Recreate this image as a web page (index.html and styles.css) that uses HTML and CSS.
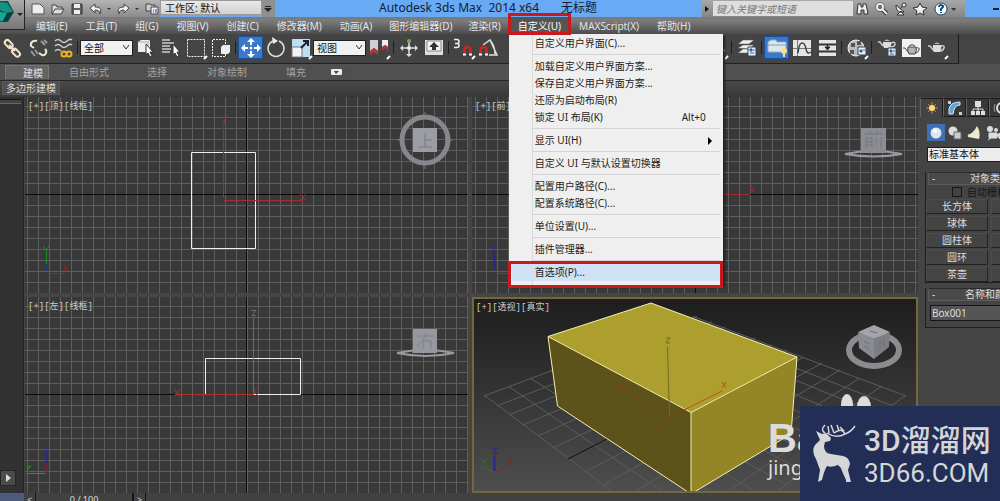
FILE: index.html
```html
<!DOCTYPE html>
<html lang="zh-CN">
<head>
<meta charset="utf-8">
<title>Autodesk 3ds Max 2014 x64</title>
<link rel="stylesheet" href="styles.css">
</head>
<body>
<header class="head">
  <button class="app" aria-label="应用程序">
    <svg width="25" height="30" viewBox="0 0 25 30"><path d="M0 1h8l6 11-6 10H0z" fill="#0b5752"/><path d="M0 2l7 1 6 9-6 1-7-3z" fill="#159283"/><path d="M0 12l7 1-4 8H0z" fill="#1aa694"/><path d="M7 13l6-1-6 9H3z" fill="#063c3c"/><path d="M17 13h6l-3 3z" fill="#222"/></svg>
  </button>
  <div class="titlebar">
    <div class="quick">
      <button aria-label="新建"><svg width="14" height="12" viewBox="0 0 14 12"><path d="M1 1h8l4 4v6H1z" fill="#eee" stroke="#555"/></svg></button>
      <button aria-label="打开"><svg width="14" height="12" viewBox="0 0 14 12"><path d="M1 11V2h4l1 2h5v2M1 11l3-5h9l-3 5z" fill="#ddd" stroke="#444"/></svg></button>
      <button aria-label="保存"><svg width="12" height="12" viewBox="0 0 12 12"><path d="M1 1h10v10H1z" fill="#59626c" stroke="#333"/><path d="M3 1h6v4H3zM3 7h6v4H3z" fill="#eee"/></svg></button>
      <button aria-label="撤消"><svg width="22" height="12" viewBox="0 0 22 12"><path d="M1 5l5-4v3c5 0 7 2 5 7 0-3-2-4-5-4v3z" fill="#eee" stroke="#444"/><path d="M18 5h4l-2 2z" fill="#333"/></svg></button>
      <button aria-label="重做"><svg width="22" height="12" viewBox="0 0 22 12"><path d="M12 5L7 1v3C2 4 0 6 2 11c0-3 2-4 5-4v3z" fill="#eee" stroke="#444"/><path d="M18 5h4l-2 2z" fill="#333"/></svg></button>
      <button aria-label="项目文件夹"><svg width="14" height="13" viewBox="0 0 14 13"><path d="M1 2h4l1 1h4v6H1z" fill="#ccc" stroke="#444"/><path d="M6 5h7v7H6z" fill="#eee" stroke="#446"/><path d="M8 8h1M10 8h2M8 10h1M10 10h2" stroke="#346"/></svg></button>
    </div>
    <select class="workspace" aria-label="工作区"><option>工作区: 默认</option></select>
    <button class="drop" aria-label="自定义快速访问工具栏"><svg width="12" height="10" viewBox="0 0 12 10"><path d="M3 2h6v1H3zM2 4h8L6 8z" fill="#222"/></svg></button>
    <h1>Autodesk 3ds Max  2014 x64<span>无标题</span></h1>
    <div class="search">
      <button aria-label="展开"><svg width="9" height="10" viewBox="0 0 9 10"><path d="M3 2l4 3-4 3z" fill="#111"/></svg></button>
      <input type="text" aria-label="搜索" placeholder="键入关键字或短语">
      <button aria-label="查找"><svg width="16" height="14" viewBox="0 0 16 14"><path d="M3 2h3v3h2V2h3l2 10H9V8H6v4H2z" fill="#eee" stroke="#333"/></svg></button>
      <button aria-label="订阅"><svg width="16" height="14" viewBox="0 0 16 14"><path d="M8 7l5 5" stroke="#333" stroke-width="4"/><circle cx="6" cy="5" r="3" fill="#777" stroke="#333" stroke-width="3"/><path d="M8 7l5 5" stroke="#eee" stroke-width="2"/><circle cx="6" cy="5" r="3" fill="none" stroke="#eee" stroke-width="2"/></svg></button>
      <button aria-label="通讯中心"><svg width="16" height="14" viewBox="0 0 16 14"><path d="M3 3c0 6 3 8 8 7zM4 13h7l-3-4zM7 7l4-5" fill="#eee" stroke="#333"/><circle cx="11" cy="3" r="2" fill="#eee" stroke="#333"/></svg></button>
      <button aria-label="收藏夹"><svg width="16" height="14" viewBox="0 0 16 14"><path d="M8 1l2 4 5 1-4 3 1 4-4-2-4 2 1-4-4-3 5-1z" fill="#eee" stroke="#333"/></svg></button>
      <button class="help" aria-label="帮助"><svg width="24" height="14" viewBox="0 0 24 14"><circle cx="8" cy="7" r="6" fill="#fff" stroke="#234a72"/><path d="M6 5c0-3 5-2 4 0l-2 2v2M8 10v1" stroke="#174a86" stroke-width="2" fill="none"/><path d="M18 6h5l-2 3z" fill="#333"/></svg></button>
    </div>
    <button class="min" aria-label="最小化"><svg width="8" height="4" viewBox="0 0 8 4"><path d="M1 2h6" stroke="#123" stroke-width="2"/></svg></button>
  </div>
  <nav class="menubar">
    <button>编辑(E)</button><button>工具(T)</button><button>组(G)</button><button>视图(V)</button><button>创建(C)</button><button>修改器(M)</button><button>动画(A)</button><button class="tight">图形编辑器(D)</button><button class="tight">渲染(R)</button>
    <div class="open">
      <button aria-expanded="true">自定义(U)</button>
      <div class="menu" role="menu">
        <button role="menuitem">自定义用户界面(C)...</button>
        <hr>
        <button role="menuitem">加载自定义用户界面方案...</button>
        <button role="menuitem">保存自定义用户界面方案...</button>
        <button role="menuitem">还原为启动布局(R)</button>
        <button role="menuitem">锁定 UI 布局(K)<kbd>Alt+0</kbd></button>
        <hr>
        <button role="menuitem">显示 UI(H)<svg class="sub" width="4" height="8" viewBox="0 0 4 8"><path d="M0 0l4 4-4 4z"/></svg></button>
        <hr>
        <button role="menuitem">自定义 UI 与默认设置切换器</button>
        <hr>
        <button role="menuitem">配置用户路径(C)...</button>
        <button role="menuitem">配置系统路径(C)...</button>
        <hr>
        <button role="menuitem">单位设置(U)...</button>
        <hr>
        <button role="menuitem">插件管理器...</button>
        <hr>
        <button role="menuitem" class="hot">首选项(P)...</button>
      </div>
    </div>
    <button>MAXScript(X)</button><button>帮助(H)</button>
  </nav>
</header>

<div class="toolbar">
  <button aria-label="选择并链接"><svg viewBox="0 0 24 24"><g fill="none" stroke="#f2e6c8" stroke-width="2"><rect x="3" y="5" width="9" height="5" rx="2.500" transform="rotate(45 7 8)"/><rect x="11" y="14" width="9" height="5" rx="2.500" transform="rotate(45 15 16)"/><path d="M8 9l6 6"/></g></svg></button>
  <button aria-label="取消链接"><svg viewBox="0 0 24 24"><g fill="none" stroke="#f2e6c8" stroke-width="2"><path d="M11 5c-3-1-7 1-6 5l3 2M19 13c3 3 0 7-3 6l-3-2"/></g><g fill="none" stroke="#9a9a9a" stroke-width="2"><path d="M15 5l4 4M18 4l3 3M5 15l4 5M9 14l3 4"/></g></svg></button>
  <button aria-label="绑定到空间扭曲"><svg viewBox="0 0 24 24"><g fill="none" stroke="#ccc" stroke-width="1.500"><path d="M4 5q3-3 6 0t6 0 5-1M4 10q3-3 6 0t6 0 5-1M4 15q3-3 6 0"/></g><g fill="none" stroke="#f3b21c" stroke-width="2"><circle cx="13" cy="18" r="2.500"/><circle cx="18" cy="18" r="2.500"/></g></svg></button>
  <i class="sep"></i>
  <select class="filter" aria-label="选择过滤器"><option>全部</option></select>
  <button aria-label="选择对象"><svg viewBox="0 0 24 24"><path d="M4 6l3-2h9v12H4z" fill="#eee"/><path d="M4 6h10l2-2M14 6v10" stroke="#aaa" fill="none"/><path d="M12 8l7 8h-3l2 4-2 1-2-4-2 2z" fill="#fff" stroke="#333"/></svg></button>
  <button aria-label="按名称选择"><svg viewBox="0 0 24 24"><path d="M3 4h8M3 7h12M3 10h8M3 13h9M3 16h8" stroke="#ccc" stroke-width="1.500"/><path d="M14 8l7 8h-3l2 4-2 1-2-4-2 2z" fill="#fff" stroke="#333"/></svg></button>
  <button aria-label="矩形选择区域"><svg viewBox="0 0 24 24"><path d="M3.500 3.500h17v17h-17z" fill="none" stroke="#eee" stroke-dasharray="2 1"/><path d="M20 23l3-3" stroke="#fff" stroke-width="2"/></svg></button>
  <button aria-label="窗口/交叉"><svg viewBox="0 0 24 24"><path d="M16.500 8V3.500h-13v17h13V17" fill="none" stroke="#eee" stroke-dasharray="2 1"/><path d="M12 11l2-2h7v7l-2 2h-7z" fill="#eee"/></svg></button>
  <i class="sep"></i>
  <button class="on" aria-label="选择并移动"><svg viewBox="0 0 24 24"><path d="M12 2l4 4h-3v3h-2V6H8zM12 22l4-4h-3v-3h-2v3H8zM2 12l4-4v3h3v2H6v3zM22 12l-4-4v3h-3v2h3v3z" fill="#fff"/><circle cx="12" cy="12" r="1.500" fill="#fff"/></svg></button>
  <button aria-label="选择并旋转"><svg viewBox="0 0 24 24"><path d="M15 5a8 8 0 1 1-6 0" fill="none" stroke="#ddd" stroke-width="1.500"/><path d="M8 1l6 4-5 3z" fill="#eee"/></svg></button>
  <button aria-label="选择并缩放"><svg viewBox="0 0 24 24"><path d="M3 3h18v18H3z" fill="#bcdcf0"/><path d="M3 11h10v10H3z" fill="#f2f2f2" stroke="#778"/><path d="M12 12l6-6M14 5h5v5" stroke="#123" stroke-width="2" fill="none"/><path d="M20 23l3-3" stroke="#fff" stroke-width="2"/></svg></button>
  <select class="filter" aria-label="参考坐标系"><option>视图</option></select>
  <button aria-label="使用轴点中心"><svg viewBox="0 0 24 24"><path d="M3 4h8v11l-4-3-4 3z" fill="#ccd0d8"/><path d="M3 15l4-3 4 3v4l-4-3-4 3z" fill="#b33"/><path d="M15 4h6v7l-3-2-3 2z" fill="#eee"/><path d="M15 11l3-2 3 2v4l-3-3-3 3z" fill="#b33"/><path d="M20 23l3-3" stroke="#fff" stroke-width="2"/></svg></button>
  <i class="sep"></i>
  <button aria-label="选择并操纵"><svg viewBox="0 0 24 24"><path d="M12 5v14M5 12h14" stroke="#ddd" stroke-width="1.500"/><circle cx="12" cy="5" r="2" fill="#6fae4a"/><path d="M12 21l-3-3h6zM3 12l3-3v6zM21 12l-3-3v6z" fill="#ddd"/><circle cx="12" cy="12" r="2" fill="#eee"/></svg></button>
  <button aria-label="键盘快捷键覆盖"><svg viewBox="0 0 24 24"><path d="M3 4h18v15H3z" fill="#ddd"/><path d="M5 5h14v10H5z" fill="#f5f5f5" stroke="#888"/><path d="M12 6l5 5h-3v3h-4v-3H7z" fill="#333"/></svg></button>
  <i class="sep"></i>
  <button aria-label="捕捉开关"><svg viewBox="0 0 24 24"><path d="M2 3.500h3q2 0 2 2t-2 2H3h2q2 0 2 2t-2 2H2" fill="none" stroke="#eee" stroke-width="1.500"/><path d="M12.500 17v-3q0-3 3-3t3 3v3" fill="none" stroke="#c4282b" stroke-width="2.500"/><path d="M11 18.500h3M17 18.500h3" stroke="#fff" stroke-width="2"/><path d="M20 23l3-3" stroke="#fff" stroke-width="2"/></svg></button>
  <button aria-label="角度捕捉"><svg viewBox="0 0 24 24"><path d="M6 9l7-5 7 15h-8M13 4q5 6 5 14" fill="none" stroke="#ddd" stroke-width="1.500"/><path d="M3.500 17v-3q0-3 3-3t3 3v3" fill="none" stroke="#c4282b" stroke-width="2.500"/><path d="M2 18.500h3M8 18.500h3" stroke="#fff" stroke-width="2"/></svg></button>
  <div class="covered"></div>
  <svg class="tail" viewBox="0 0 8 24"><path d="M0 13h4v3H0z" fill="#ddd"/><path d="M4 23l3-3" stroke="#fff" stroke-width="2"/></svg>
  <i class="sep"></i>
  <button aria-label="层管理器"><svg viewBox="0 0 24 24"><path d="M3 8l5-4h11l-5 4zM3 12l5-3h11l-5 4zM3 17l5-4h11l-5 4z" fill="#eee" stroke="#555" stroke-width=".5"/><path d="M13 11h8v9h-8z" fill="#e6eef8" stroke="#345"/><path d="M15 13h2v2h-2zM15 17h4M18 14h2" stroke="#3a6090" fill="#3a6090"/></svg></button>
  <i class="sep"></i>
  <button class="on" aria-label="切换功能区"><svg viewBox="0 0 24 24"><path d="M3 6l3-2h5l1 2h9v10H3z" fill="#dde7f4" stroke="#9ab"/><path d="M3 9h18" stroke="#89a"/><circle cx="19" cy="15" r="3" fill="#ffe07a"/><path d="M18 18h2v3h-2z" fill="#ddd"/></svg></button>
  <button aria-label="曲线编辑器"><svg viewBox="0 0 24 24"><path d="M3 4h18v16H3z" fill="#e4e4e4"/><path d="M7.500 4v16M3 12.500h18" stroke="#777"/><path d="M8 17q1-10 4-10t4 6 5 3" fill="none" stroke="#345" stroke-width="1.500"/></svg></button>
  <button aria-label="图解视图"><svg viewBox="0 0 24 24"><path d="M4 4h17v16H4z" fill="#e4e4e4"/><path d="M4 8.500h17M4 15.500h17" stroke="#333" stroke-width="2"/><path d="M12.500 8v3M10 11h5l-2.500 3z" stroke="#223" fill="#223"/></svg></button>
  <i class="sep"></i>
  <button aria-label="材质编辑器"><svg viewBox="0 0 24 24"><circle cx="11" cy="12" r="8" fill="#bbb" stroke="#eee"/><path d="M6 7h4v4H6zM12 5h4v4h-4zM5 14h4v4H5z" fill="#555"/><path d="M13 11h8v8h-8z" fill="#e6eef8" stroke="#345"/><path d="M15 14h2v2h-2zM18 14h2" stroke="#3a6090" fill="#3a6090"/><path d="M20 23l3-3" stroke="#fff" stroke-width="2"/></svg></button>
  <i class="sep"></i>
  <button aria-label="渲染设置"><svg viewBox="0 0 24 24"><path d="M8 6h8q1 3-1 6H9Q7 9 8 6z" fill="#ddd"/><path d="M8 10L5 6H3M16 7q4-2 4 1t-5 3" fill="none" stroke="#ccc" stroke-width="1.500"/><path d="M9 5q3-3 6 0z" fill="#bbb"/><path d="M13 12h8v8h-8z" fill="#e6eef8" stroke="#345"/><path d="M15 14h2v2h-2zM15 18h4M18 15h2" stroke="#3a6090" fill="#3a6090"/></svg></button>
  <button aria-label="渲染帧窗口"><svg viewBox="0 0 24 24"><path d="M2 3h19v18H2z" fill="#f1f1f1"/><path d="M8 11q-1 4 1 7h6q2-3 1-7z" fill="#b4b4b8" stroke="#444"/><path d="M8 16l-3-4H3M16 12q4-1 3 2t-4 3M9 10q3-3 6 0" fill="none" stroke="#444"/></svg></button>
  <button aria-label="渲染产品"><svg viewBox="0 0 24 24"><path d="M8 9q-1 4 1 7h6q2-3 1-7z" fill="#ddd"/><path d="M9 15l-4-5H3M16 10q4-1 3 2t-4 3" fill="none" stroke="#ccc" stroke-width="1.500"/><path d="M9 8q3-3 6 0z" fill="#bbb"/><path d="M20 23l3-3" stroke="#fff" stroke-width="2"/></svg></button>
</div>

<div class="ribbon">
  <div class="tabs">
    <button class="cur">建模</button><button>自由形式</button><button>选择</button><button>对象绘制</button><button>填充</button>
    <svg width="20" height="8" viewBox="0 0 20 8"><rect x="0" y="1" width="11" height="6" rx="1" fill="#eee"/><path d="M3 3h5L5 6zM14 3h4l-2 2z" fill="#444"/></svg>
  </div>
  <div class="panel"><button>多边形建模</button></div>
</div>

<main class="work">
  <aside class="strip"><i></i><button aria-label="播放"><svg width="6" height="8" viewBox="0 0 6 8"><path d="M0 0l5 4-5 4z" fill="#ddd"/></svg></button></aside>
  <section class="views">
    <div class="view">
      <svg class="scene">
        <defs><pattern id="g1" width="11" height="11" patternUnits="userSpaceOnUse" x="2" y="9"><path d="M0 .5H11M.5 0V11" stroke="#5e5e5e"/></pattern></defs>
        <rect width="100%" height="100%" fill="url(#g1)"/>
        <g transform="translate(-25 -97)" fill="none">
          <path d="M25 194.500H470M246.500 97V294" stroke="#0b0b0b"/>
          <path d="M191.500 152.500h64v96h-64z" stroke="#f0f0f0"/>
          <path d="M223.500 198v-70M222 129l3-9M223 122l4-6M224 200.500h79M300 194l6 6M306 194l-6 6" stroke="#9c3030"/>
          <path d="M46.500 270v-20M43 246l3 4 3-4" stroke="#1f8a28"/><path d="M46.500 264v7" stroke="#243b7a" stroke-width="2"/><path d="M48 273.500h18M64 266l4 5M68 266l-4 5" stroke="#a02020"/>
          <circle cx="425" cy="140" r="23" stroke="#85878c" stroke-width="5"/><path d="M413 128h24v24h-24z" fill="#9b9da3"/><path d="M425 112v4M425 165v4M397 140h3M450 140h3" stroke="#777"/>
          <path d="M425 133v14M425 140h7M418 147h14" stroke="#777a80"/>
        </g>
      </svg>
      <span class="tag">[+][顶][线框]</span>
    </div>
    <div class="view">
      <svg class="scene">
        <defs><pattern id="g2" width="11" height="11" patternUnits="userSpaceOnUse" x="3" y="9"><path d="M0 .5H11M.5 0V11" stroke="#5e5e5e"/></pattern></defs>
        <rect width="100%" height="100%" fill="url(#g2)"/>
        <g transform="translate(-472 -97)" fill="none">
          <path d="M472 194.500H918M695.500 97V294" stroke="#0b0b0b"/>
          <path d="M670 194.500h80M750 188l4 4M754 187l-4 5M497 273.500h20" stroke="#a02c2c"/>
          <path d="M494.500 270v-17" stroke="#26268a" stroke-width="2"/><path d="M492 246.500h5l-5 5h5" stroke="#26268a"/>
          <path d="M845 154q28-6 57 0-28 5-57 0" stroke="#999ba0" stroke-width="2"/><path d="M861 128h25v25h-25z" fill="#8b8d93"/><path d="M864 134h19M869 131l2 3M878 131l-2 3M866 138v10M866 138h6v10M866 142h6M866 145h6M876 138v7M881 137v11" stroke="#74767c"/>
        </g>
      </svg>
      <span class="tag">[+][前][线框]</span>
    </div>
    <div class="view">
      <svg class="scene">
        <defs><pattern id="g3" width="11" height="11" patternUnits="userSpaceOnUse" x="2" y="9"><path d="M0 .5H11M.5 0V11" stroke="#5e5e5e"/></pattern></defs>
        <rect width="100%" height="100%" fill="url(#g3)"/>
        <g transform="translate(-25 -297)" fill="none">
          <path d="M25 394.500H470M246.500 297V494" stroke="#0b0b0b"/>
          <path d="M205.500 395v-36.500h95v36h-47" stroke="#f0f0f0"/>
          <path d="M253.500 317v77M251 310.500h5l-4 5h4" stroke="#6c6c6c"/>
          <path d="M175 394.500h78M174 389l6 7M180 389l-5 7M252 389l5 6M257 388l-5 7" stroke="#a8332e"/>
          <path d="M46.500 453v14" stroke="#2a2a92" stroke-width="2"/><path d="M44 445.500h5l-4 5h4" stroke="#2a2a92"/><path d="M46.500 463v9" stroke="#7a1c4c" stroke-width="2"/><path d="M27 473.500h19M27 465l3 3M31 465l-4 6" stroke="#1f9a28"/>
          <path d="M397 353q28-6 57 0-28 6-57 0" stroke="#999ba0" stroke-width="2"/><path d="M413 329h24v24h-24z" fill="#9698a0"/><path d="M417 336h17M426 333q-2 8-9 13M423 341v8M423 341h8v8" stroke="#7e8086"/>
        </g>
      </svg>
      <span class="tag">[+][左][线框]</span>
    </div>
    <div class="view active">
      <svg class="scene">
        <g transform="translate(-474 -299)" fill="none">
          <path stroke="#5c5c5c" d="M484 396L697 316.500M497 406L712 322M509 415L725 327M523 425L740 333M538 436L755 338M553 448L772 345M568 459L787 350M585 472L804 357M603 485L822 363M622 499L840 370M643 515L860 378M667 533L882 386M694 553L906 395M906 396L693 316.500M893 406L678 322M881 415L665 327M867 425L650 333M852 436L635 338M837 448L618 345M822 459L603 350M805 472L586 357M787 485L568 363M768 499L550 370M747 515L530 378M723 533L508 386M694 553L484 395"/>
          <path d="M568 459l41-21" stroke="#080808"/>
          <path d="M548 336.500L651 303l146 54-106 55.500z" fill="#ad9f2e"/>
          <path d="M548 336.500l143 76V494L557.500 406z" fill="#5d531a"/>
          <path d="M691 412.500L797 357l-6 77-100 60z" fill="#948527"/>
          <path d="M548 336.500L651 303l146 54-106 55.500zM691 412.500V494L557.500 406 548 336.500M797 357l-6 77-100 60" stroke="#f4f0b0"/>
          <path d="M667.500 347l2 70M666 338h4l-4 5h4" stroke="#726a28"/>
          <path d="M669 417l17-8" stroke="#8a431a"/><path d="M686 409l36-18M722 382l4 6M726 382l-4 6" stroke="#b8521c"/><path d="M669 417l-46-28M620 384l5 5M624 383l-3 6" stroke="#7c421a"/>
          <path d="M494.500 471v-16" stroke="#262694" stroke-width="2"/><path d="M492 448.500h5l-4 5h4" stroke="#262694"/><path d="M496 472l14-7M508 458l4 6M512 458l-4 6" stroke="#8a2424"/><path d="M494 473l-12-7M481 459l3 4 3-5" stroke="#1f7a28"/>
          <ellipse cx="874" cy="350" rx="25" ry="16" stroke="#8a8c90" stroke-width="6"/>
          <path d="M874 325l16 7-16 7-16-7z" fill="#a2a4a9"/><path d="M858 332l16 7v20l-15-11z" fill="#8a8c92"/><path d="M890 332l-16 7v20l15-12z" fill="#7c7e84"/><path d="M870 331l7 2M864 341l5 3M864 346l5 3M880 340v9M884 338v9" stroke="#6b6d72"/>
          <g fill="#dcdcdc"><ellipse cx="847" cy="405" rx="6" ry="11"/><ellipse cx="864" cy="407" rx="7" ry="11"/></g>
        </g>
      </svg>
      <span class="tag">[+][透视][真实]</span>
      <div class="mark"><b>Ba</b><span>jing</span></div>
    </div>
  </section>
  <aside class="side">
    <div class="modes">
      <button class="cur" aria-label="创建"><svg width="16" height="16" viewBox="0 0 16 16"><path d="M8 2v12M2 8h12M4 4l8 8M12 4l-8 8" stroke="#c4842f"/><circle cx="8" cy="8" r="3" fill="#ffd980"/></svg></button>
      <button aria-label="修改"><svg width="16" height="16" viewBox="0 0 16 16"><path d="M2 14V9q1-7 11-7v3q-6 0-7 9z" fill="#5ba6d6" stroke="#dfe9f0"/><path d="M1 1h3v3H1zM12 12h3v3h-3z" fill="#ccc"/></svg></button>
      <button aria-label="层次"><svg width="16" height="16" viewBox="0 0 16 16"><path d="M5 1h6v6H5zM1 11h4v4H1zM6 11h4v4H6zM11 11h4v4h-4z" fill="#ddd"/><path d="M8 7v4M3 11V9h10v2" stroke="#ddd" fill="none"/></svg></button>
      <button aria-label="运动"><svg width="16" height="16" viewBox="0 0 16 16"><circle cx="9" cy="8" r="5" fill="none" stroke="#ddd" stroke-width="2"/><circle cx="9" cy="8" r="2" fill="#ddd"/><path d="M2 4q-2 4 0 8" stroke="#999" fill="none"/></svg></button>
    </div>
    <div class="kinds">
      <button class="on" aria-label="几何体"><svg width="16" height="16" viewBox="0 0 16 16"><circle cx="8" cy="8" r="5.500" fill="#dfe6ee"/><circle cx="7" cy="6" r="2" fill="#fff"/></svg></button>
      <button aria-label="图形"><svg width="16" height="16" viewBox="0 0 16 16"><circle cx="6" cy="6" r="4.500" fill="#ddd"/><path d="M7 7h7v7H7z" fill="#ccc" stroke="#666"/></svg></button>
      <button aria-label="灯光"><svg width="16" height="16" viewBox="0 0 16 16"><path d="M11 1q4 6 2 13L2 12q-1-3 2-3 4-2 7-8z" fill="#eee9cc"/></svg></button>
      <button aria-label="摄影机"><svg width="16" height="16" viewBox="0 0 16 16"><circle cx="5" cy="4" r="3" fill="#ddd"/><circle cx="11" cy="5" r="2" fill="#ddd"/><path d="M4 8h8v5H4zM12 10l3-2v6zM6 13l-3 2" fill="#ddd" stroke="#ddd"/></svg></button>
    </div>
    <select class="cat" aria-label="类别"><option>标准基本体</option></select>
    <div class="roll">
      <button class="bar"><span>-</span>对象类型</button>
      <label class="auto"><input type="checkbox">自动栅格</label>
      <div class="types"><button>长方体</button><button></button><button>球体</button><button></button><button>圆柱体</button><button></button><button>圆环</button><button></button><button>茶壶</button><button></button></div>
    </div>
    <div class="roll">
      <button class="bar"><span>-</span>名称和颜色</button>
      <input class="name" type="text" aria-label="名称" value="Box001">
    </div>
  </aside>
</main>

<footer class="track">
  <i></i><button aria-label="上一帧">&lt;</button><div>0 / 100</div><button aria-label="下一帧">&gt;</button>
</footer>

<div class="logo">
  <svg width="44" height="58" viewBox="0 0 44 58" fill="#d5d6d8"><path d="M4 7l6 3 4-1 5 5-1 3-5 1-1 4q0 7 7 8l12 2q6 1 7 8l-2 6 3 12h-5v-2l-4-9q-1-4-4-6-7 3-11 1-3 5-5 14l-4 2 2-12-4-11q-5-8-1-14l5-5z"/><path d="M13 9Q8 6 13 1M15 9Q24 15 33 10M33 10Q39 8 43 2M17 9l-1-7M22 9l-3-8M27 7l-2-6M32 7l-4-4M22 9q8-6 11 1" fill="none" stroke="#d5d6d8" stroke-width="1.500"/></svg>
  <div><strong>3D溜溜网</strong><span>3D66.COM</span></div>
</div>
</body>
</html>
```

FILE: styles.css
```css
* { box-sizing: border-box; }
html, body { height: 100%; }
body {
  margin: 0;
  position: relative;
  display: flex;
  flex-direction: column;
  min-height: 100vh;
  overflow: hidden;
  background: #444;
  color: #ddd;
  font: 10px/14px "Noto Sans", "Noto Sans CJK SC", sans-serif;
}
button, select, input { font: inherit; color: inherit; margin: 0; padding: 0; border: 0; border-radius: 0; background: none; appearance: none; }
button { white-space: nowrap; flex: none; }
svg { display: block; flex: none; }

/* Title bar and menu bar */
.head { display: grid; grid-template-columns: 25px 1fr; grid-template-rows: 17px 17px; flex: none; background: linear-gradient(#707070, #7c7c7c 60%, #4c4c4c); }
.app { grid-row: 1 / 3; height: 30px; background: linear-gradient(#aaa, #777); border-right: 1px solid #222; border-bottom: 1px solid #222; }
.titlebar { display: flex; align-items: stretch; background: #68abf4; color: #14202e; }
.quick { display: flex; align-items: center; width: 135px; padding-left: 6px; gap: 6px; background: linear-gradient(#b4b4b4, #8c8c8c); flex: none; }
.workspace { width: 102px; height: 15px; padding-left: 4px; background: #e6e6e6; color: #111; border: 1px solid #999; line-height: 12px; flex: none;
  background: linear-gradient(#e8e8e8, #d2d2d2); }
.drop { background: #8f8f8f; width: 13px; }
h1 { flex: 1; margin: 0; padding-left: 104px; font-size: 12px; line-height: 16px; font-weight: 400; white-space: pre; }
h1 span { padding-left: 22px; }
.search { display: flex; align-items: center; width: 263px; flex: none; background: linear-gradient(#a8a8a8, #858585); }
.search input { width: 140px; height: 15px; margin-left: 2px; padding: 0 3px; background: #dedede; font-style: italic; }
.search input::placeholder { color: #777; }
.search button { width: 19px; display: flex; justify-content: center; }
.search button:first-child { width: 9px; }
.search .help { width: 32px; }
.min { width: 35px; display: flex; align-items: center; justify-content: flex-end; }
.menubar { display: flex; padding-left: 2px; color: #e4e4e4; }
.menubar > button, .open > button { padding: 0 9px; height: 17px; line-height: 16px; }
.menubar > .tight { padding: 0 8px; }
.open { position: relative; flex: none; }
.open::before { content: ""; position: absolute; inset: -4px -1px -1px -1px; border: 3px solid #c8191d; z-index: 6; pointer-events: none; }
.open > button { background: #555; color: #fff; }
.menu { position: absolute; left: 0; top: 17px; width: 214px; padding: 1px 3px 4px; display: flex; flex-direction: column; z-index: 5; color: #1c1c1c;
  background: linear-gradient(90deg, #efefef 23px, #d8d8d8 23px, #d8d8d8 24px, #efefef 24px); box-shadow: 2px 2px 2px #222; }
.menu button { display: flex; align-items: center; justify-content: space-between; height: 17px; line-height: 17px; padding: 0 14px 0 23px; text-align: left; }
.menu hr { width: auto; height: 1px; margin: 2px 0 3px 21px; border: 0; background: #d4d4d4; align-self: stretch; }
.menu kbd { font: inherit; }
.menu .sub { margin-right: -6px; }
.menu .hot { position: relative; background: #cfe1f5; }
.menu .hot::after { content: ""; position: absolute; inset: -3px -3px -7px -4px; border: 3px solid #c8191d; }

/* Main toolbar */
.toolbar { display: flex; align-items: center; flex: none; height: 30px; width: 959px; background: #444; border-right: 1px solid #1c1c1c; border-bottom: 1px solid #222; padding-bottom: 2px; }
.toolbar button { width: 25px; height: 24px; display: flex; justify-content: center; align-items: center; }
.toolbar button svg { width: 24px; height: 24px; }
.toolbar .on { background: #3b78c9; border: 1px solid #1d4f94; height: 23px; }
.sep { width: 1px; height: 13px; margin: 0 2px; background: #1f1f1f; flex: none; }
.filter { width: 53px; height: 16px; padding-left: 3px; line-height: 14px; color: #111; border: 1px solid #222; flex: none;
  background: #f1f1f1 url("data:image/svg+xml,%3Csvg xmlns='http://www.w3.org/2000/svg' width='7' height='5'%3E%3Cpath d='M0 0l3 4 3-4' fill='none' stroke='%23333'/%3E%3C/svg%3E") no-repeat right 2px center; }
.covered { width: 220px; flex: none; }
.tail { width: 8px; height: 24px; }

/* Ribbon */
.ribbon { flex: none; }
.tabs { height: 16px; display: flex; align-items: center; background: #505050; color: #a4a4a4; padding-left: 5px; }
.tabs button { height: 14px; width: 78px; line-height: 14px; }
.tabs .cur { width: 44px; margin-right: 2px; padding-left: 12px; background: #646464; border: 1px solid #777; border-bottom: 0; line-height: 12px; color: #e0e0e0; }
.tabs .cur + button { width: 76px; }
.tabs .cur + button + button { width: 60px; }
.tabs .cur + button + button + button { width: 80px; }
.tabs .cur + button + button + button + button { width: 58px; }
.tabs svg { margin-left: 6px; }
.panel { height: 17px; border-top: 1px solid #262626; background: linear-gradient(#484848, #383838); }
.panel button { height: 14px; padding: 0 3px; margin-left: 2px; background: #505050; border: 1px solid #5a5a5a; line-height: 12px; }

/* Work area */
.work { flex: 1; min-height: 0; display: flex; }
.strip { width: 24px; flex: none; background: #323232; border-right: 1px solid #222; display: flex; flex-direction: column; justify-content: space-between; padding: 2px 0 7px; }
.strip i { height: 5px; width: 21px; background: #444; border-top: 1px solid #151515; border-bottom: 1px solid #666; }
.strip button { width: 16px; height: 16px; background: #4b4b4b; border: 1px solid #252525; padding-left: 5px; }
.views { flex: 1; min-width: 0; display: grid; grid-template-columns: 443fr 446fr; grid-template-rows: 1fr 1fr; gap: 4px; padding: 0 2px 0 1px; background: #454545; }
.view { position: relative; overflow: hidden; background: #393939; min-width: 0; min-height: 0; }
.scene { position: absolute; inset: 0; width: 100%; height: 100%; }
.view.active { border: 2px solid #75673a; background: linear-gradient(#1e1e1e, #262626 20%, #4e4e4e); }
.tag { position: relative; display: block; padding: 4px 3px; font: 9px/12px "Liberation Mono", "Noto Sans CJK SC", monospace; color: #ccc; }
.active .tag { padding: 3px 2px; }
.mark { position: absolute; right: 66px; bottom: 11px; width: 82px; display: flex; flex-direction: column; color: #dcdcdc; font-family: "Liberation Sans", sans-serif; }
.mark b { font-size: 40px; line-height: 36px; }
.mark span { font: 20px/24px "Noto Sans", sans-serif; }

/* Command panel */
.side { width: 80px; flex: none; overflow: hidden; background: #444; }
.modes { display: flex; height: 20px; padding-top: 1px; }
.modes button { width: 23px; height: 19px; display: flex; align-items: center; justify-content: center; border: 1px solid #1a1a1a; border-left-color: #666; background: #383838; }
.modes .cur { background: #444; border-bottom: 0; }
.kinds { display: flex; padding: 7px 0 0 7px; gap: 1px; }
.kinds button { width: 18px; height: 17px; display: flex; align-items: center; justify-content: center; }
.kinds .on { background: #3f6fb4; }
.cat { display: block; width: 130px; height: 15px; margin: 6px 0 0 7px; padding-left: 1px; border: 1px solid #1c1c1c; background: #ececec; color: #111; line-height: 13px; }
.roll { width: 132px; margin: 10px 0 0 5px; position: relative; border: 1px solid #1e1e1e; border-top: 0; padding-bottom: 2px; }
.cat + .roll { padding-bottom: 0; }
.bar { display: block; position: relative; width: 124px; height: 13px; margin-left: 2px; line-height: 11px; background: #4a4a4a; border: 1px solid #5c5c5c; border-top-color: #2c2c2c; }
.bar span { position: absolute; left: 3px; }
.auto { display: flex; align-items: center; height: 14px; padding-left: 26px; gap: 5px; color: #151515; }
.auto input { width: 10px; height: 10px; border: 1px solid #161616; background: #444; }
.types { display: grid; grid-template-columns: 62px 62px; column-gap: 3px; row-gap: 2px; }
.types button { height: 15px; line-height: 13px; border: 1px solid #4c4c4c; border-right-color: #222; border-bottom-color: #222; }
.roll + .roll { margin-top: 5px; }
.name { display: block; width: 110px; height: 16px; margin: 4px 0 4px 4px; padding: 0 1px; background: #555; border: 1px solid #151515; }

/* Time slider */
.track { flex: none; height: 8px; overflow: hidden; display: flex; background: #414141; font-size: 9px; line-height: 14px; }
.track i { width: 24px; background: #4c5c7a; flex: none; }
.track button { width: 12px; border-right: 1px solid #151515; line-height: 14px; height: 14px; }
.track div { width: 98px; text-align: center; border-right: 2px solid #151515; }

/* Site badge */
.logo { position: absolute; right: 0; bottom: 0; z-index: 8; width: 200px; height: 95px; padding: 18px 0 0 12px; display: flex; gap: 8px; background: #222e55; color: #d5d6d8; }
.logo div { display: flex; flex-direction: column; gap: 4px; }
.logo strong { font: 500 30px/34px "Roboto", "Noto Sans CJK SC", sans-serif; white-space: nowrap; }
.logo span { font: 26px/22px "Roboto", sans-serif; }
```
